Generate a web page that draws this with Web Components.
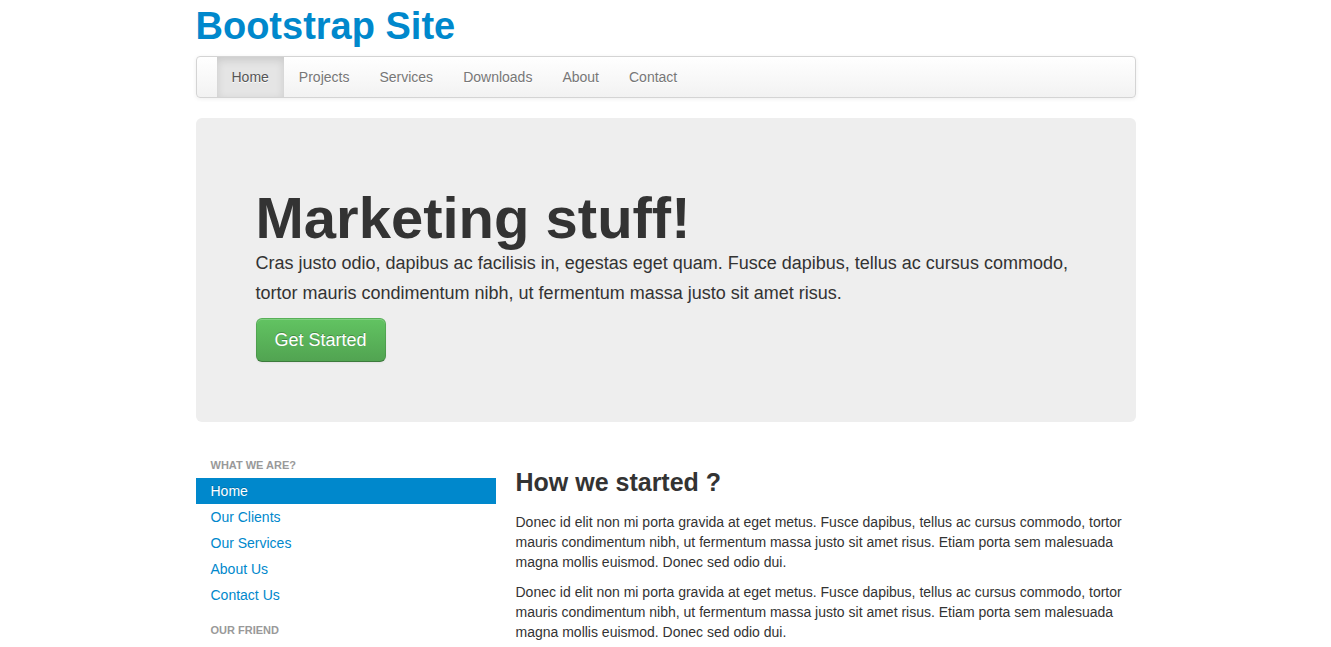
<!DOCTYPE html>
<html lang="en">
<head>
<meta charset="utf-8">
<meta name="viewport" content="width=device-width, initial-scale=1">
<title>Bootstrap Site</title>
<style>
  body {
    margin: 0;
    background: #fff;
    color: #333;
    font: 14px/20px "Liberation Sans", Arial, sans-serif;
  }
</style>
</head>
<body>
<site-page>
  <site-brand slot="header" href="#">Bootstrap Site</site-brand>
  <site-navbar slot="header">
    <nav-item href="#home" active>Home</nav-item>
    <nav-item href="#projects">Projects</nav-item>
    <nav-item href="#services">Services</nav-item>
    <nav-item href="#downloads">Downloads</nav-item>
    <nav-item href="#about">About</nav-item>
    <nav-item href="#contact">Contact</nav-item>
  </site-navbar>
  <hero-unit slot="hero">
    <span slot="title">Marketing stuff!</span>
    Cras justo odio, dapibus ac facilisis in, egestas eget quam. Fusce dapibus, tellus ac cursus commodo, tortor mauris condimentum nibh, ut fermentum massa justo sit amet risus.
    <action-button slot="action">Get Started</action-button>
  </hero-unit>
  <side-nav slot="sidebar">
    <side-group label="WHAT WE ARE?">
      <side-link href="#home" active>Home</side-link>
      <side-link href="#clients">Our Clients</side-link>
      <side-link href="#our-services">Our Services</side-link>
      <side-link href="#about-us">About Us</side-link>
      <side-link href="#contact-us">Contact Us</side-link>
    </side-group>
    <side-group label="OUR FRIEND"></side-group>
  </side-nav>
  <text-section>
    <span slot="title">How we started ?</span>
    <text-block>Donec id elit non mi porta gravida at eget metus. Fusce dapibus, tellus ac cursus commodo, tortor mauris condimentum nibh, ut fermentum massa justo sit amet risus. Etiam porta sem malesuada magna mollis euismod. Donec sed odio dui.</text-block>
    <text-block>Donec id elit non mi porta gravida at eget metus. Fusce dapibus, tellus ac cursus commodo, tortor mauris condimentum nibh, ut fermentum massa justo sit amet risus. Etiam porta sem malesuada magna mollis euismod. Donec sed odio dui.</text-block>
  </text-section>
</site-page>

<script>
  class BaseElement extends HTMLElement {
    constructor() {
      super();
      this.attachShadow({ mode: "open" }).innerHTML = this.constructor.markup;
    }
    connectedCallback() {
      const link = this.shadowRoot.querySelector("a");
      if (link) {
        link.href = this.getAttribute("href") || "#";
        if (this.hasAttribute("active")) link.setAttribute("aria-current", "page");
      }
    }
  }

  customElements.define("site-page", class extends BaseElement {
    static markup = `
      <style>
        :host { display: block; max-width: 940px; margin: 0 auto; }
        header { padding-top: 6px; }
        .columns {
          display: grid;
          grid-template-columns: 15fr 31fr;
          gap: 20px;
          align-items: start;
          margin-top: 30px;
        }
        @media (max-width: 767px) {
          :host { padding: 0 20px; }
          .columns { grid-template-columns: 1fr; }
        }
      </style>
      <header><slot name="header"></slot></header>
      <slot name="hero"></slot>
      <div class="columns">
        <aside><slot name="sidebar"></slot></aside>
        <main><slot></slot></main>
      </div>`;
  });

  customElements.define("site-brand", class extends BaseElement {
    static markup = `
      <style>
        :host { display: block; margin-bottom: 10px; }
        h1 { margin: 0; font-size: 38px; line-height: 40px; }
        a { color: #08c; text-decoration: none; }
      </style>
      <h1><a><slot></slot></a></h1>`;
  });

  customElements.define("site-navbar", class extends BaseElement {
    static markup = `
      <style>
        :host { display: block; margin-bottom: 20px; }
        nav {
          display: flex;
          flex-wrap: wrap;
          padding: 0 20px;
          border: 1px solid #d4d4d4;
          border-radius: 4px;
          background: linear-gradient(#fff, #f2f2f2);
          box-shadow: 0 1px 4px rgba(0, 0, 0, .065);
        }
      </style>
      <nav aria-label="Main"><slot></slot></nav>`;
  });

  customElements.define("nav-item", class extends BaseElement {
    static markup = `
      <style>
        :host { display: block; }
        a {
          display: block;
          padding: 10px 15px;
          color: #777;
          text-decoration: none;
          text-shadow: 0 1px 0 #fff;
        }
        a:hover { color: #333; }
        :host([active]) a {
          color: #555;
          background: #e5e5e5;
          box-shadow: inset 0 3px 8px rgba(0, 0, 0, .125);
        }
      </style>
      <a><slot></slot></a>`;
  });

  customElements.define("hero-unit", class extends BaseElement {
    static markup = `
      <style>
        :host { display: block; }
        section { padding: 70px 60px 60px; border-radius: 6px; background: #eee; }
        h2 { margin: 0; font-size: 58px; line-height: 60px; }
        p { margin: 0 0 10px; font-size: 18px; line-height: 30px; }
      </style>
      <section>
        <h2><slot name="title"></slot></h2>
        <p><slot></slot></p>
        <slot name="action"></slot>
      </section>`;
  });

  customElements.define("action-button", class extends BaseElement {
    static markup = `
      <style>
        :host { display: flex; }
        button {
          padding: 11px 18px;
          border: 1px solid;
          border-color: rgba(0, 0, 0, .1) rgba(0, 0, 0, .1) rgba(0, 0, 0, .25);
          border-radius: 6px;
          background: #5bb75b linear-gradient(#62c462, #51a351) border-box;
          box-shadow: inset 0 1px 0 rgba(255, 255, 255, .2), 0 1px 2px rgba(0, 0, 0, .05);
          color: #fff;
          font: inherit;
          font-size: 18px;
          line-height: 20px;
          text-shadow: 0 -1px 0 rgba(0, 0, 0, .25);
          cursor: pointer;
        }
      </style>
      <button type="button"><slot></slot></button>`;
  });

  customElements.define("side-nav", class extends BaseElement {
    static markup = `
      <style>
        :host { display: block; }
        nav { display: flex; flex-direction: column; gap: 9px; }
      </style>
      <nav aria-label="Sections"><slot></slot></nav>`;
  });

  customElements.define("side-group", class extends BaseElement {
    static markup = `
      <style>
        :host { display: block; }
        h4 {
          margin: 0;
          padding: 3px 15px;
          color: #999;
          font-size: 11px;
          line-height: 20px;
          text-shadow: 0 1px 0 rgba(255, 255, 255, .5);
        }
      </style>
      <h4></h4>
      <slot></slot>`;
    connectedCallback() {
      this.shadowRoot.querySelector("h4").textContent = this.getAttribute("label");
    }
  });

  customElements.define("side-link", class extends BaseElement {
    static markup = `
      <style>
        :host { display: block; }
        a {
          display: block;
          padding: 3px 15px;
          color: #08c;
          text-decoration: none;
          text-shadow: 0 1px 0 rgba(255, 255, 255, .5);
        }
        :host([active]) a {
          color: #fff;
          background: #08c;
          text-shadow: 0 -1px 0 rgba(0, 0, 0, .2);
        }
      </style>
      <a><slot></slot></a>`;
  });

  customElements.define("text-section", class extends BaseElement {
    static markup = `
      <style>
        :host { display: block; padding-top: 10px; }
        section { display: flex; flex-direction: column; gap: 10px; }
        h3 { margin: 0; font-size: 25px; line-height: 40px; }
      </style>
      <section>
        <h3><slot name="title"></slot></h3>
        <slot></slot>
      </section>`;
  });

  customElements.define("text-block", class extends BaseElement {
    static markup = `
      <style>
        :host { display: block; }
        p { margin: 0; }
      </style>
      <p><slot></slot></p>`;
  });
</script>
</body>
</html>
